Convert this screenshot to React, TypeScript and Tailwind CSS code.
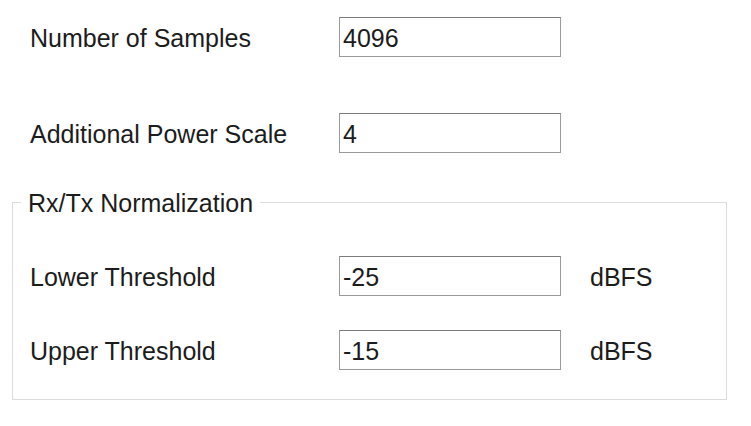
import React from "react";

const font = { fontFamily: '"Liberation Sans", Arial, sans-serif' };

function Field({ value }: { value: string }) {
  return (
    <input
      readOnly
      defaultValue={value}
      className="w-[222px] h-[40px] border border-[#9a9a9a] border-t-[#7c7c7c] bg-white pl-[3px] pt-[3px] text-[25px] text-[#1c1c1c] outline-none"
    />
  );
}

function Row({ label, value, unit }: { label: string; value: string; unit?: string }) {
  return (
    <div className="flex items-center h-[40px]">
      <span className="w-[309px] pt-[4px] text-[25px] text-[#1c1c1c]">{label}</span>
      <Field value={value} />
      {unit && <span className="ml-[29px] pt-[4px] text-[25px] text-[#1c1c1c]">{unit}</span>}
    </div>
  );
}

export default function App() {
  return (
    <div className="w-[751px] h-[426px] bg-white" style={font}>
      <div className="pt-[17px] pl-[30px]">
        <Row label="Number of Samples" value="4096" />
        <div className="mt-[56px]">
          <Row label="Additional Power Scale" value="4" />
        </div>
      </div>

      {/* Rx/Tx group */}
      <fieldset className="mt-[36px] ml-[12px] w-[715px] border border-[#dcdcdc] pl-[8px] pb-[29px]">
        <legend className="px-[7px] pt-[2px] text-[25px] leading-[24px] text-[#1c1c1c]">
          Rx/Tx Normalization
        </legend>
        <div className="pl-[9px] pt-[41px] flex flex-col gap-[34px]">
          <Row label="Lower Threshold" value="-25" unit="dBFS" />
          <Row label="Upper Threshold" value="-15" unit="dBFS" />
        </div>
      </fieldset>
    </div>
  );
}
